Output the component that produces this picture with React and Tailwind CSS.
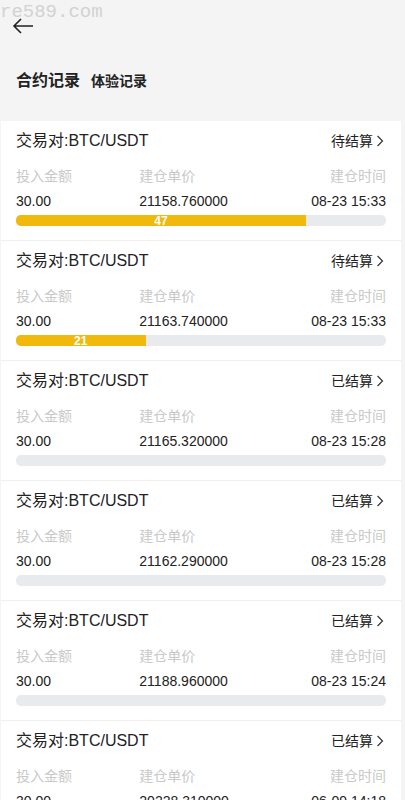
import React from "react";

const records = [
    { status: "待结算", amount: "30.00", price: "21158.760000", time: "08-23 15:33", left: 47 },
    { status: "待结算", amount: "30.00", price: "21163.740000", time: "08-23 15:33", left: 21 },
    { status: "已结算", amount: "30.00", price: "21165.320000", time: "08-23 15:28", left: 0 },
    { status: "已结算", amount: "30.00", price: "21162.290000", time: "08-23 15:28", left: 0 },
    { status: "已结算", amount: "30.00", price: "21188.960000", time: "08-23 15:24", left: 0 },
    { status: "已结算", amount: "30.00", price: "20228.310000", time: "06-09 14:18", left: 0 },
];

const font = { fontFamily: '"Liberation Sans", "Noto Sans CJK SC", sans-serif' };

const Chevron = () => (
    <svg width="8" height="12" viewBox="0 0 8 12" className="ml-[3px]">
        <path d="M1.5 1 L6.5 6 L1.5 11" fill="none" stroke="#333" strokeWidth="1.2" />
    </svg>
);

const RecordCard = ({ item }) => (
    <div className="px-[15px] pt-[9px] pb-[14px] border-b border-[#f0f0f0]">
        <div className="flex items-center justify-between h-[22px]">
            <span className="text-[16px] text-[#222]">交易对:BTC/USDT</span>
            <span className="flex items-center text-[14px] text-[#222] mr-[2px]">
                {item.status}
                <Chevron />
            </span>
        </div>
        <div className="grid grid-cols-3 mt-[14px] h-5 items-center text-[14px] text-[#c9c9c9]">
            <span>投入金额</span>
            <span>建仓单价</span>
            <span className="text-right">建仓时间</span>
        </div>
        <div className="grid grid-cols-3 mt-[5px] h-5 items-center text-[14px] text-[#222]">
            <span>{item.amount}</span>
            <span>{item.price}</span>
            <span className="text-right">{item.time}</span>
        </div>
        <div className="mt-1 h-[11px] rounded-[5px] bg-[#e8eaed] overflow-hidden flex">
            {item.left > 0 && (
                <div
                    className="h-full bg-[#f0b90b] flex items-center justify-center text-[12px] font-bold text-white leading-none"
                    style={{ width: `${(item.left / 60) * 100}%` }}
                >
                    {item.left}
                </div>
            )}
        </div>
    </div>
);

const App = () => {
    return (
        <div className="min-h-screen bg-[#f4f4f4] overflow-hidden" style={font}>
            {/* header */}
            <div className="h-[121px] relative">
                <div
                    className="absolute left-0 top-[3px] text-[19px] text-[#d2d2d2] leading-none"
                    style={{ fontFamily: '"Liberation Mono", monospace' }}
                >
                    re589.com
                </div>
                <div className="pt-[17px] pl-[12px]">
                    <svg width="22" height="18" viewBox="0 0 22 18">
                        <path d="M21 9 H2 M9 2 L2 9 L9 16" fill="none" stroke="#222" strokeWidth="1.6" />
                    </svg>
                </div>
                <div className="flex items-end pl-4 mt-[34px]">
                    <span className="text-[16px] font-bold text-[#222]">合约记录</span>
                    <span className="text-[14px] font-bold text-[#222] ml-[11px] mb-[1px]">体验记录</span>
                </div>
            </div>

            {/* list */}
            <div className="bg-white ml-px mr-1">
                {records.map((item, i) => (
                    <RecordCard key={i} item={item} />
                ))}
            </div>
        </div>
    );
};

export default App;
